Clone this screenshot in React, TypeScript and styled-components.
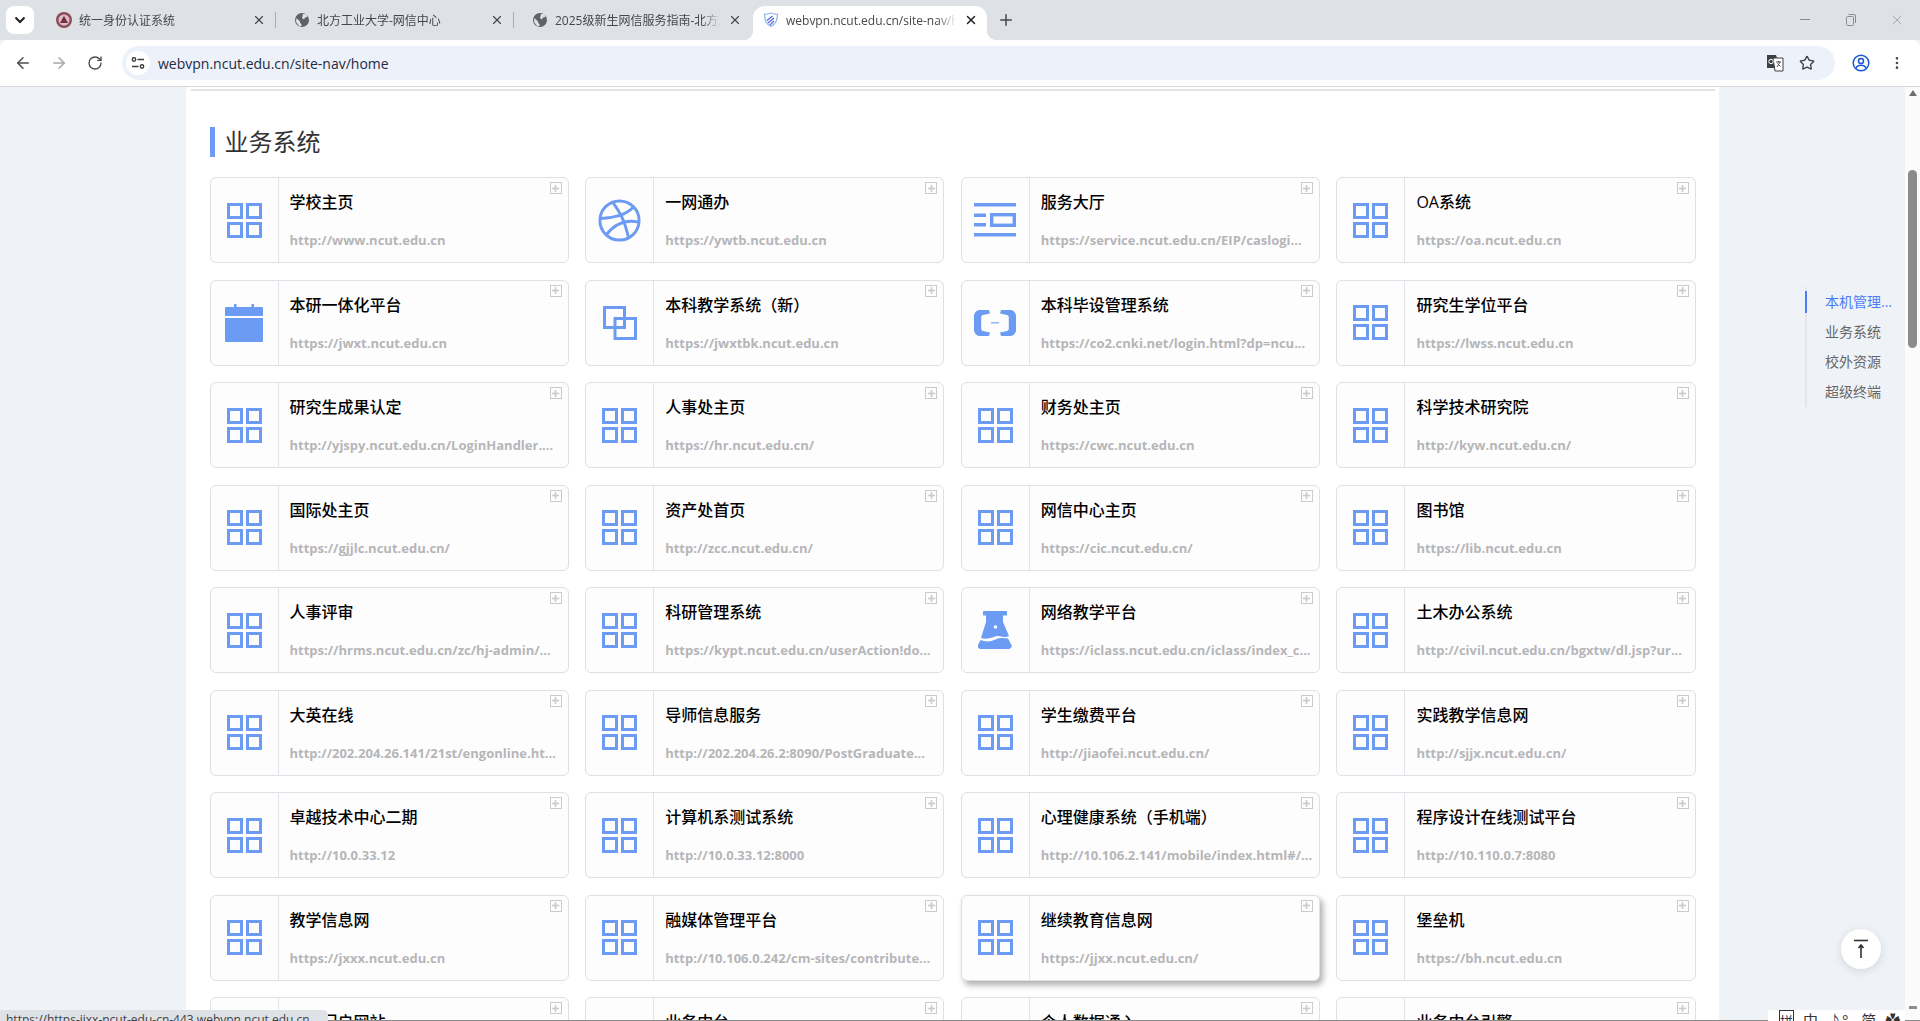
import React from 'react';
import styled, { createGlobalStyle } from 'styled-components';
import { ArrowLeft, ArrowRight, Dribbble, MoreVertical, Plus, RotateCw, Star, X } from 'lucide-react';

const BLUE = '#6c9bf3';
const UI_FONT = '"Open Sans", "Noto Sans CJK SC", sans-serif';

const GlobalStyle = createGlobalStyle`
    html, body {
        margin: 0;
        padding: 0;
        height: 100%;
        overflow: hidden;
    }
    body {
        font-family: ${UI_FONT};
    }
`

const Window = styled.div`
    position: relative;
    width: 1920px;
    height: 1021px;
    display: flex;
    flex-direction: column;
    overflow: hidden;
    background: #eff3f7;
`
const TabStrip = styled.div`
    height: 40px;
    flex: none;
    display: flex;
    background: #dee1e6;
    padding: 6px 0 0 6px;
    box-sizing: border-box;
`
const TabSearch = styled.div`
    width: 28px;
    height: 28px;
    margin-right: 12px;
    border-radius: 8px;
    background: #fff;
    display: flex;
    align-items: center;
    justify-content: center;
    color: #202124;
`
const Tab = styled.div<{ $active?: boolean; $width: number }>`
    position: relative;
    width: ${(p) => p.$width}px;
    height: 34px;
    flex: none;
    box-sizing: border-box;
    padding: 0 9px 6px 10px;
    display: flex;
    align-items: center;
    gap: 7px;
    font-size: 12px;
    color: #45474a;
    border-radius: 12px 12px 0 0;
    background: ${(p) => (p.$active ? '#fff' : 'transparent')};
    ${(p) => p.$active && `
        &::before, &::after {
            content: '';
            position: absolute;
            bottom: 0;
            width: 10px;
            height: 10px;
        }
        &::before {
            left: -10px;
            background: radial-gradient(circle at 0 0, transparent 10px, #fff 10.5px);
        }
        &::after {
            right: -10px;
            background: radial-gradient(circle at 100% 0, transparent 10px, #fff 10.5px);
        }
    `}
`
const TabLabel = styled.span`
    flex: 1;
    min-width: 0;
    white-space: nowrap;
    overflow: hidden;
    -webkit-mask-image: linear-gradient(to right, #000 88%, transparent 100%);
    mask-image: linear-gradient(to right, #000 88%, transparent 100%);
`
const TabDivider = styled.div`
    width: 1px;
    height: 16px;
    margin: 6px 8px 0 0;
    background: #a9acb0;
    flex: none;
`
const NewTab = styled.div`
    width: 28px;
    height: 28px;
    margin-left: 5px;
    display: flex;
    align-items: center;
    justify-content: center;
    color: #45474a;
`
const WindowControls = styled.div`
    margin-left: auto;
    display: flex;
    align-items: flex-start;
    margin-top: 5px;
    color: #8a8c90;
`
const WindowButton = styled.div`
    width: 46px;
    height: 18px;
    display: flex;
    align-items: center;
    justify-content: center;
`
const Toolbar = styled.div`
    height: 47px;
    flex: none;
    box-sizing: border-box;
    display: flex;
    align-items: flex-start;
    padding: 6px 0 0 5px;
    background: #fff;
    border-radius: 8px 8px 0 0;
    border-bottom: 1px solid #d6d8dc;
    margin-right: 0;
`
const NavButton = styled.div<{ $disabled?: boolean }>`
    width: 36px;
    height: 34px;
    display: flex;
    align-items: center;
    justify-content: center;
    color: ${(p) => (p.$disabled ? '#a6a8ab' : '#4a4c50')};
`
const Omnibox = styled.div`
    width: 1713px;
    height: 34px;
    margin-left: 9px;
    box-sizing: border-box;
    padding: 0 12px 0 4px;
    display: flex;
    align-items: center;
    background: #edf2fa;
    border-radius: 17px;
`
const SiteInfo = styled.div`
    width: 24px;
    height: 24px;
    border-radius: 50%;
    background: #fff;
    display: flex;
    align-items: center;
    justify-content: center;
    margin-right: 8px;
`
const UrlText = styled.span`
    flex: 1;
    font-size: 14px;
    color: #1f2a44;
`
const OmniAction = styled.div`
    width: 32px;
    display: flex;
    justify-content: center;
    color: #3c4043;
`
const ProfileButton = styled.div`
    width: 36px;
    height: 34px;
    margin-left: 8px;
    display: flex;
    align-items: center;
    justify-content: center;
`
const Viewport = styled.div`
    flex: 1;
    min-height: 0;
    display: flex;
`
const Page = styled.div`
    flex: 1;
    min-width: 0;
    display: flex;
    justify-content: center;
    overflow: hidden;
`
const Panel = styled.main`
    width: 1533px;
    flex: none;
    box-sizing: border-box;
    padding: 2px 23.5px 0;
    background: #fff;
`
const TopRule = styled.div`
    height: 2px;
    margin: 0 -19px 36px;
    background: #e4e4de;
`
const SectionTitle = styled.h2`
    height: 30px;
    margin: 0 0 20px;
    padding-left: 10px;
    border-left: 5px solid ${BLUE};
    font-size: 24px;
    line-height: 30px;
    font-weight: 400;
    color: #333;
`
const CardGrid = styled.div`
    display: grid;
    grid-template-columns: repeat(4, 1fr);
    grid-auto-rows: 86px;
    column-gap: 16.5px;
    row-gap: 16.55px;
`
const Card = styled.a<{ $hover?: boolean }>`
    position: relative;
    display: flex;
    box-sizing: border-box;
    border: 1px solid #dfe0e7;
    border-radius: 6px;
    background: #fdfdfe;
    box-shadow: ${(p) => (p.$hover ? '3px 4px 6px rgba(0, 0, 0, 0.32)' : 'none')};
`
const IconCell = styled.div`
    width: 67px;
    flex: none;
    display: flex;
    align-items: center;
    justify-content: center;
    border-right: 1px solid #e2e3e9;
    color: ${BLUE};
`
const CardBody = styled.div`
    flex: 1;
    min-width: 0;
    padding: 12px 0 0 11px;
`
const CardTitle = styled.div`
    height: 24px;
    font-size: 16px;
    line-height: 24px;
    font-weight: 500;
    color: #000;
    white-space: nowrap;
`
const CardUrl = styled.div`
    margin-top: 15px;
    height: 22px;
    font-size: 13px;
    line-height: 22px;
    font-weight: 700;
    color: #b6b6b8;
    white-space: nowrap;
`
const AddBadge = styled.div`
    position: absolute;
    top: 4px;
    right: 6px;
    width: 12px;
    height: 12px;
    box-sizing: border-box;
    border: 1.5px solid #cbcbcb;
    display: flex;
    align-items: center;
    justify-content: center;
    color: #cbcbcb;
`
const Scrollbar = styled.div`
    width: 15px;
    flex: none;
    background: #fbfbfb;
    display: flex;
    flex-direction: column;
    align-items: center;
`
const ScrollArrow = styled.div`
    width: 0;
    height: 0;
    margin-top: 3px;
    border-left: 4px solid transparent;
    border-right: 4px solid transparent;
    border-bottom: 6px solid #6f6f6f;
`
const ScrollThumb = styled.div`
    width: 9px;
    height: 178px;
    margin-top: 74px;
    border-radius: 5px;
    background: #8b8b8b;
`
const ScrollArrowDown = styled.div`
    width: 8px;
    height: 3px;
    margin-top: auto;
    margin-bottom: 11px;
    border-radius: 1px 1px 0 0;
    background: #8b8b8b;
`
const TaskbarEdge = styled.div`
    height: 1px;
    flex: none;
    background: #8a8a8a;
`
const Anchor = styled.nav`
    position: absolute;
    left: 1805px;
    top: 287px;
    width: 96px;
    height: 120px;
    box-sizing: border-box;
    padding-left: 2px;
    border-left: 2px solid #e3e5e8;
`
const AnchorMark = styled.div`
    position: absolute;
    left: -2px;
    top: 4px;
    width: 2px;
    height: 22px;
    background: #4a7cf6;
`
const AnchorItem = styled.div<{ $active?: boolean }>`
    height: 30px;
    padding-left: 16px;
    font-size: 14px;
    line-height: 30px;
    color: ${(p) => (p.$active ? '#4a7cf6' : '#666')};
`
const BackTop = styled.div`
    position: absolute;
    left: 1841px;
    top: 929px;
    width: 40px;
    height: 40px;
    border-radius: 50%;
    background: #fff;
    box-shadow: 0 2px 10px rgba(0, 0, 0, 0.12);
    display: flex;
    align-items: center;
    justify-content: center;
`
const StatusBubble = styled.div`
    position: absolute;
    left: 0;
    top: 1010px;
    width: 328px;
    height: 20px;
    box-sizing: border-box;
    padding: 2px 0 0 6px;
    background: #dee1e6;
    border-radius: 0 5px 0 0;
    font-size: 12px;
    line-height: 16px;
    color: #3c4043;
    white-space: nowrap;
    overflow: hidden;
`
const ImeBar = styled.div`
    position: absolute;
    left: 1768px;
    top: 1010px;
    width: 137px;
    height: 20px;
    box-sizing: border-box;
    padding-left: 11px;
    background: #fff;
    display: flex;
    gap: 9px;
    font-size: 15px;
    line-height: 20px;
    color: #333;
`
const ImeBoxed = styled.span`
    width: 15px;
    height: 20px;
    border: 1px solid #333;
    box-sizing: border-box;
    text-align: center;
    font-size: 13px;
`

const GridIcon = () => (
    <svg width="35" height="35" viewBox="0 0 35 35" fill="none" stroke="currentColor" strokeWidth="3">
        <rect x="1.5" y="1.5" width="13" height="13" />
        <rect x="20.5" y="1.5" width="13" height="13" />
        <rect x="1.5" y="20.5" width="13" height="13" />
        <rect x="20.5" y="20.5" width="13" height="13" />
    </svg>
)

const ServiceIcon = () => (
    <svg width="42" height="34" viewBox="0 0 42 34" fill="currentColor">
        <rect x="0" y="0" width="42" height="3.5" />
        <rect x="0" y="30" width="42" height="3.5" />
        <rect x="0" y="10.5" width="12" height="3.5" />
        <rect x="0" y="20" width="12" height="3.5" />
        <rect x="17.7" y="11.7" width="22.6" height="10.6" fill="none" stroke="currentColor" strokeWidth="3.4" />
    </svg>
)

const CalendarIcon = () => (
    <svg width="38" height="38" viewBox="0 0 38 38" fill="currentColor">
        <rect x="9" y="0" width="2.5" height="5" />
        <rect x="26.5" y="0" width="2.5" height="5" />
        <path d="M1 3h36a1 1 0 0 1 1 1v8H0V4a1 1 0 0 1 1-1z" />
        <path d="M0 14h38v23a1 1 0 0 1-1 1H1a1 1 0 0 1-1-1z" />
    </svg>
)

const LayersIcon = () => (
    <svg width="34" height="34" viewBox="0 0 34 34" fill="none" stroke="currentColor" strokeWidth="3">
        <rect x="1.5" y="1.5" width="20" height="20" />
        <rect x="12" y="12.5" width="20.5" height="20" />
    </svg>
)

const BracketIcon = () => (
    <svg width="42" height="26" viewBox="0 0 42 26" fill="currentColor">
        <path d="M15 0H6C2.7 0 0 2.7 0 6v14c0 3.3 2.7 6 6 6h9l1-3.5-7-1.5c-1-.2-1.8-1.2-1.8-2.3V7.3c0-1.1.8-2.1 1.8-2.3l7-1.5z" />
        <path d="M27 0h9c3.3 0 6 2.7 6 6v14c0 3.3-2.7 6-6 6h-9l-1-3.5 7-1.5c1-.2 1.8-1.2 1.8-2.3V7.3c0-1.1-.8-2.1-1.8-2.3l-7-1.5z" />
        <rect x="17" y="12" width="8" height="1.6" opacity="0.7" />
    </svg>
)

const FlaskIcon = () => (
    <svg width="34" height="38" viewBox="0 0 34 38" fill="currentColor">
        <rect x="5" y="0" width="24" height="4.5" rx="0.5" />
        <path d="M8 4h17v7l6 14c-5 3-9-1.500-14 .5-5 2-10 3-14 1.500L8 11z" />
        <path d="M2.500 29c5 2 10 2 15-.5 4-2 9-1.500 12.500-1l3.500 6.500c.8 2-.7 4-3 4H3c-2.300 0-3.800-2-3-4z" />
        <circle cx="17.500" cy="16" r="1.800" fill="#fdfdfe" />
    </svg>
)

const BasketIcon = () => <Dribbble size={47} strokeWidth={1.5} />

const AddIcon = () => (
    <svg width="7" height="7" viewBox="0 0 7 7" fill="currentColor">
        <rect x="2.700" y="0" width="1.600" height="7" />
        <rect x="0" y="2.700" width="7" height="1.600" />
    </svg>
)

const icons = {
    grid: GridIcon,
    service: ServiceIcon,
    calendar: CalendarIcon,
    layers: LayersIcon,
    bracket: BracketIcon,
    flask: FlaskIcon,
    basket: BasketIcon,
}

type IconName = keyof typeof icons;

interface Site {
    title: string;
    url: string;
    icon?: IconName;
    hover?: boolean;
}

const sites: Site[] = [
    { title: '学校主页', url: 'http://www.ncut.edu.cn' },
    { title: '一网通办', url: 'https://ywtb.ncut.edu.cn', icon: 'basket' },
    { title: '服务大厅', url: 'https://service.ncut.edu.cn/EIP/caslogi...', icon: 'service' },
    { title: 'OA系统', url: 'https://oa.ncut.edu.cn' },
    { title: '本研一体化平台', url: 'https://jwxt.ncut.edu.cn', icon: 'calendar' },
    { title: '本科教学系统（新）', url: 'https://jwxtbk.ncut.edu.cn', icon: 'layers' },
    { title: '本科毕设管理系统', url: 'https://co2.cnki.net/login.html?dp=ncu...', icon: 'bracket' },
    { title: '研究生学位平台', url: 'https://lwss.ncut.edu.cn' },
    { title: '研究生成果认定', url: 'http://yjspy.ncut.edu.cn/LoginHandler....' },
    { title: '人事处主页', url: 'https://hr.ncut.edu.cn/' },
    { title: '财务处主页', url: 'https://cwc.ncut.edu.cn' },
    { title: '科学技术研究院', url: 'http://kyw.ncut.edu.cn/' },
    { title: '国际处主页', url: 'https://gjjlc.ncut.edu.cn/' },
    { title: '资产处首页', url: 'http://zcc.ncut.edu.cn/' },
    { title: '网信中心主页', url: 'https://cic.ncut.edu.cn/' },
    { title: '图书馆', url: 'https://lib.ncut.edu.cn' },
    { title: '人事评审', url: 'https://hrms.ncut.edu.cn/zc/hj-admin/...' },
    { title: '科研管理系统', url: 'https://kypt.ncut.edu.cn/userAction!do...' },
    { title: '网络教学平台', url: 'https://iclass.ncut.edu.cn/iclass/index_c...', icon: 'flask' },
    { title: '土木办公系统', url: 'http://civil.ncut.edu.cn/bgxtw/dl.jsp?ur...' },
    { title: '大英在线', url: 'http://202.204.26.141/21st/engonline.ht...' },
    { title: '导师信息服务', url: 'http://202.204.26.2:8090/PostGraduate...' },
    { title: '学生缴费平台', url: 'http://jiaofei.ncut.edu.cn/' },
    { title: '实践教学信息网', url: 'http://sjjx.ncut.edu.cn/' },
    { title: '卓越技术中心二期', url: 'http://10.0.33.12' },
    { title: '计算机系测试系统', url: 'http://10.0.33.12:8000' },
    { title: '心理健康系统（手机端）', url: 'http://10.106.2.141/mobile/index.html#/...' },
    { title: '程序设计在线测试平台', url: 'http://10.110.0.7:8080' },
    { title: '教学信息网', url: 'https://jxxx.ncut.edu.cn' },
    { title: '融媒体管理平台', url: 'http://10.106.0.242/cm-sites/contribute...' },
    { title: '继续教育信息网', url: 'https://jjxx.ncut.edu.cn/', hover: true },
    { title: '堡垒机', url: 'https://bh.ncut.edu.cn' },
    { title: '信息门户网站', url: 'https://portal.ncut.edu.cn' },
    { title: '业务中台', url: 'https://ywzt.ncut.edu.cn' },
    { title: '个人数据通入', url: 'https://data.ncut.edu.cn' },
    { title: '业务中台引擎', url: 'https://engine.ncut.edu.cn' },
];

const anchors = ['本机管理...', '业务系统', '校外资源', '超级终端'];

const SchoolIcon = () => (
    <svg width="16" height="16" viewBox="0 0 16 16" style={{ flex: 'none' }}>
        <circle cx="8" cy="8" r="8" fill="#8f4a5c" />
        <circle cx="8" cy="8" r="5.500" fill="#d9c3c8" />
        <path d="M8 3.800 12 11H4z" fill="#7c2b40" />
    </svg>
)

const GlobeIcon = () => (
    <svg width="16" height="16" viewBox="0 0 16 16" style={{ flex: 'none' }}>
        <circle cx="8" cy="8" r="7" fill="#5f6368" />
        <path d="M2.500 6 6 9.500v1.200l1.500 1.500V14l-2 .5L2 10zM9 2h3.500l1 3-2.500.500-1 2-2-1.500z" fill="#dee1e6" />
    </svg>
)

const ShieldIcon = () => (
    <svg width="16" height="16" viewBox="0 0 16 16" style={{ flex: 'none' }} fill="none">
        <path d="M8 1c2 1 4.500 1.400 6.500 1.400 0 5.500-1.500 9.600-6.500 12.100C3 12 1.500 7.900 1.500 2.400 3.500 2.400 6 2 8 1z" stroke="#8fb8e8" strokeWidth="1.300" />
        <path d="M4 8.500 9.500 4M5 11 11 6M7 13l4-4" stroke="#5a63d8" strokeWidth="1.300" />
    </svg>
)

const SliderIcon = () => (
    <svg width="14" height="14" viewBox="0 0 14 14" fill="none" stroke="#3c4043" strokeWidth="1.400">
        <circle cx="3" cy="3.500" r="1.700" />
        <path d="M6.500 3.500H13M1 10.500h6.500" />
        <circle cx="11" cy="10.500" r="1.700" />
    </svg>
)

const TranslateIcon = () => (
    <svg width="18" height="18" viewBox="0 0 18 18">
        <path d="M1 1h9l1 3v10H1z" fill="#3c4043" />
        <path d="M7 4h10v13H9z" fill="#fff" stroke="#3c4043" strokeWidth="1" />
        <circle cx="5" cy="7.500" r="2.200" fill="none" stroke="#fff" strokeWidth="1" />
        <path d="M10 8h5M12.500 7v1M11 13l3-5M11.500 9.500l3 3" stroke="#3c4043" strokeWidth="0.900" fill="none" />
    </svg>
)

const ProfileIcon = () => (
    <svg width="18" height="18" viewBox="0 0 18 18" fill="none" stroke="#1a56d6" strokeWidth="1.500">
        <circle cx="9" cy="9" r="7.800" />
        <circle cx="9" cy="7" r="2.500" />
        <path d="M4 14c1-2 3-2.800 5-2.800s4 .8 5 2.800" />
    </svg>
)

const RestoreIcon = () => (
    <svg width="10" height="12" viewBox="0 0 10 12" fill="none" stroke="currentColor" strokeWidth="1">
        <rect x="0.500" y="2.500" width="7" height="9" rx="1" />
        <path d="M2.500 .5h5.500a1.500 1.500 0 0 1 1.500 1.500v7" />
    </svg>
)

const BackTopIcon = () => (
    <svg width="16" height="20" viewBox="0 0 16 20" fill="none" stroke="#333" strokeWidth="1.600">
        <path d="M1 1.500h14" />
        <path d="M8 19V6M5.500 9 8 6l2.500 3" />
    </svg>
)

const App: React.FC = () => {
    return (
        <Window>
            <GlobalStyle />
            <TabStrip>
                <TabSearch>
                    <svg width="12" height="8" viewBox="0 0 12 8" fill="none" stroke="currentColor" strokeWidth="2">
                        <path d="M1.500 1.500 6 6l4.500-4.500" />
                    </svg>
                </TabSearch>
                <Tab $width={229}>
                    <SchoolIcon />
                    <TabLabel>统一身份认证系统</TabLabel>
                    <X size={14} />
                </Tab>
                <TabDivider />
                <Tab $width={229}>
                    <GlobeIcon />
                    <TabLabel>北方工业大学-网信中心</TabLabel>
                    <X size={14} />
                </Tab>
                <TabDivider />
                <Tab $width={229}>
                    <GlobeIcon />
                    <TabLabel>2025级新生网信服务指南-北方工业大学</TabLabel>
                    <X size={14} />
                </Tab>
                <Tab $active $width={234} style={{ marginLeft: 2 }}>
                    <ShieldIcon />
                    <TabLabel>webvpn.ncut.edu.cn/site-nav/home</TabLabel>
                    <X size={14} color="#202124" strokeWidth={2.500} />
                </Tab>
                <NewTab>
                    <Plus size={18} />
                </NewTab>
                <WindowControls>
                    <WindowButton>
                        <svg width="10" height="2" viewBox="0 0 10 2"><rect width="10" height="1" fill="currentColor" /></svg>
                    </WindowButton>
                    <WindowButton>
                        <RestoreIcon />
                    </WindowButton>
                    <WindowButton>
                        <X size={16} strokeWidth={1} />
                    </WindowButton>
                </WindowControls>
            </TabStrip>
            <Toolbar>
                <NavButton><ArrowLeft size={18} /></NavButton>
                <NavButton $disabled><ArrowRight size={18} /></NavButton>
                <NavButton><RotateCw size={16} /></NavButton>
                <Omnibox>
                    <SiteInfo><SliderIcon /></SiteInfo>
                    <UrlText>webvpn.ncut.edu.cn/site-nav/home</UrlText>
                    <OmniAction><TranslateIcon /></OmniAction>
                    <OmniAction><Star size={16} /></OmniAction>
                </Omnibox>
                <ProfileButton><ProfileIcon /></ProfileButton>
                <NavButton><MoreVertical size={16} /></NavButton>
            </Toolbar>
            <Viewport>
                <Page>
                    <Panel>
                        <TopRule />
                        <SectionTitle>业务系统</SectionTitle>
                        <CardGrid>
                            {sites.map((site) => {
                                const Icon = icons[site.icon ?? 'grid'];
                                return (
                                    <Card key={site.title} $hover={site.hover}>
                                        <IconCell><Icon /></IconCell>
                                        <CardBody>
                                            <CardTitle>{site.title}</CardTitle>
                                            <CardUrl>{site.url}</CardUrl>
                                        </CardBody>
                                        <AddBadge><AddIcon /></AddBadge>
                                    </Card>
                                );
                            })}
                        </CardGrid>
                    </Panel>
                </Page>
                <Scrollbar>
                    <ScrollArrow />
                    <ScrollThumb />
                    <ScrollArrowDown />
                </Scrollbar>
            </Viewport>
            <TaskbarEdge />
            <Anchor>
                <AnchorMark />
                {anchors.map((item, i) => (
                    <AnchorItem key={item} $active={i === 0}>{item}</AnchorItem>
                ))}
            </Anchor>
            <BackTop><BackTopIcon /></BackTop>
            <StatusBubble>https://https-jjxx-ncut-edu-cn-443.webvpn.ncut.edu.cn</StatusBubble>
            <ImeBar>
                <ImeBoxed>拼</ImeBoxed>
                <span>中</span>
                <span>♪°,</span>
                <span>简</span>
                <span>✿</span>
            </ImeBar>
        </Window>
    );
}

export default App;
